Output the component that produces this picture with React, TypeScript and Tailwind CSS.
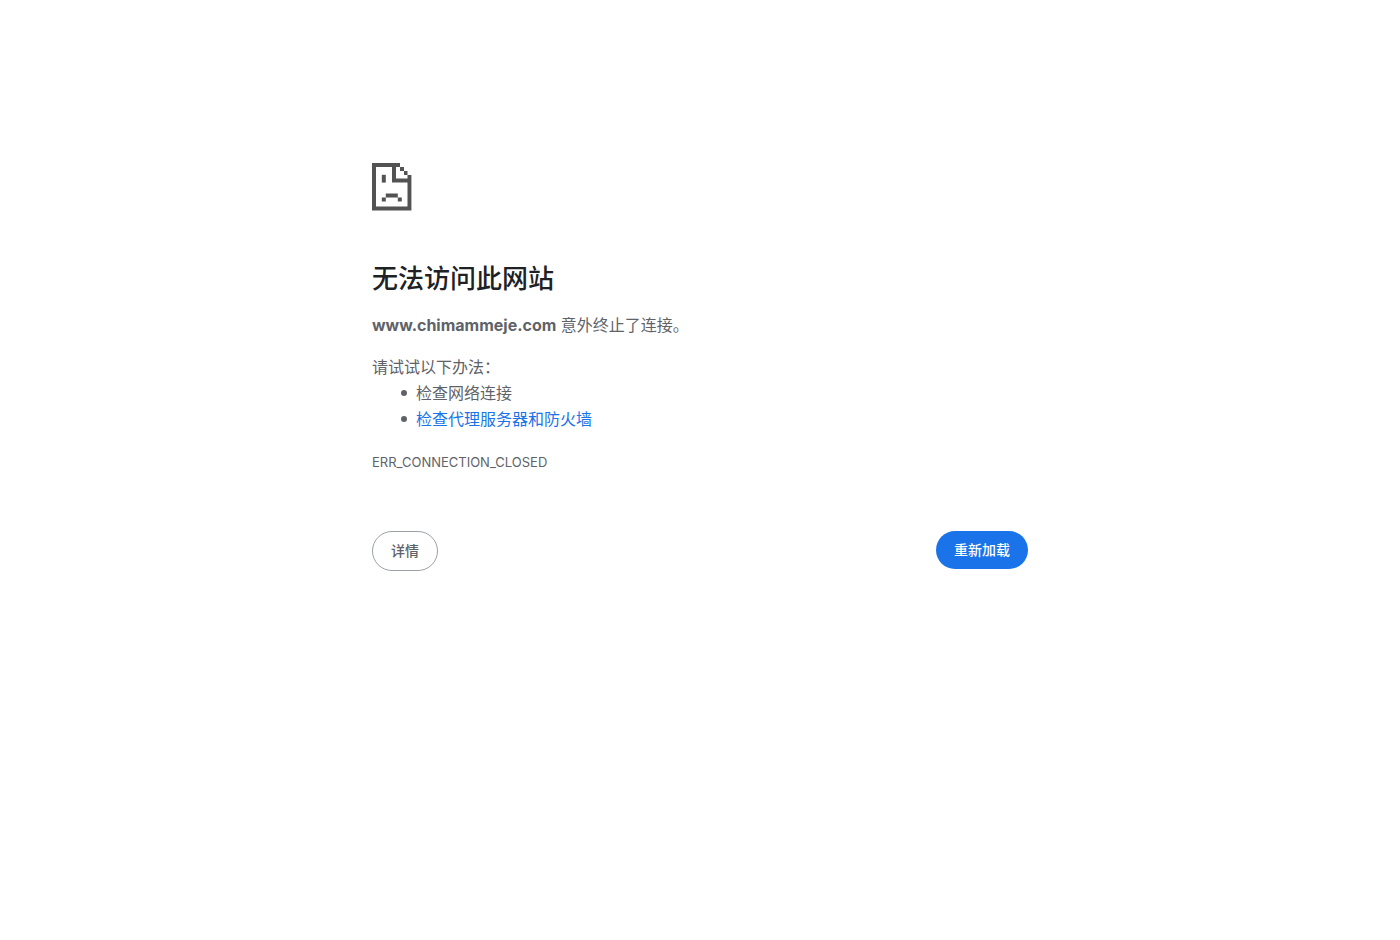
function SadPageIcon() {
  return (
    <svg
      width="40"
      height="48"
      viewBox="0 0 40 48"
      fill="#535353"
      aria-hidden="true"
    >
      <path d="M0 0H28V4H24V15.5H35.5V12H39.4V47.5H0ZM4 4V43.5H35.5V19.5H20V4Z" fillRule="evenodd" />
      <path d="M28 4H32V8H28ZM32 8H35.5V12H32Z" />
      <path d="M9.8 11.8H13.8V19.6H9.8Z" />
      <path d="M13.8 30.6H25.8V34.5H13.8ZM9.8 34.5H13.8V38.5H9.8ZM25.8 34.5H29.8V38.5H25.8Z" />
    </svg>
  );
}

const bulletItem =
  "flex items-center before:mr-[9px] before:size-[6px] before:rounded-full before:bg-[#5f6368] before:content-['']";

export default function App() {
  return (
    <main
      lang="zh-CN"
      className="mx-auto w-full max-w-[656px] pt-[163px] font-['Inter','Noto_Sans_CJK_SC',sans-serif] text-base leading-[26px] text-[#5f6368]"
    >
      <SadPageIcon />
      <h1 className="mt-12 text-[26px] leading-10 font-medium text-[#202124]">无法访问此网站</h1>
      <p className="mt-[13px]">
        <strong className="font-bold">www.chimammeje.com</strong> 意外终止了连接。
      </p>
      <p className="mt-4">请试试以下办法：</p>
      <ul className="pl-[29px]">
        <li className={bulletItem}>检查网络连接</li>
        <li className={bulletItem}>
          <a href="#proxy" className="text-[#1a73e8]">检查代理服务器和防火墙</a>
        </li>
      </ul>
      <p className="mt-[17px] text-[13px]">ERR_CONNECTION_CLOSED</p>
      <div className="mt-14 flex items-start justify-between text-sm font-medium">
        <button type="button" className="h-10 rounded-full border border-[#9aa0a6] px-[18px] text-[#5f6368]">
          详情
        </button>
        <button type="button" className="h-[38px] rounded-full bg-[#1a73e8] px-[18px] text-white">
          重新加载
        </button>
      </div>
    </main>
  );
}
